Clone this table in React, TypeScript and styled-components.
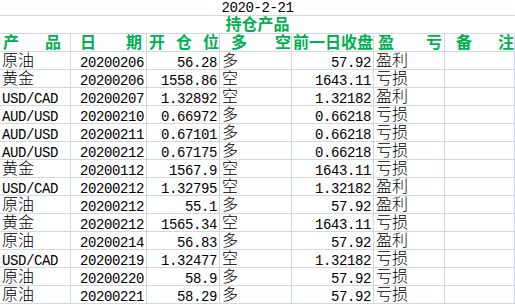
import React from "react";
import styled, { createGlobalStyle, css } from "styled-components";

const GRID = "#d0d7e5";
const GREEN = "#00b050";
const CJK = `"Noto Sans CJK SC", "Noto Sans", sans-serif`;
const MONO = `"Liberation Mono", "DejaVu Sans Mono", monospace`;

const GlobalStyle = createGlobalStyle`
  html, body { margin: 0; padding: 0; background: #ffffff; }
  body { width: 515px; height: 305px; overflow: hidden; }
`;

type Kind = "cjk" | "latin";

const textKind = (k: Kind) =>
  k === "cjk"
    ? css`
        font-family: ${CJK};
        font-size: 16px;
        font-weight: 300;
        line-height: 15px;
        padding-top: 0px;
      `
    : css`
        font-family: ${MONO};
        font-size: 14px;
        letter-spacing: -0.4px;
        line-height: 15px;
        padding-top: 4px;
      `;

const Sheet = styled.div`
  display: flex;
  flex-direction: column;
  width: 515px;
  color: #000;
`;

const SpanRow = styled.div<{ $h: number; $kind: Kind; $accent?: boolean }>`
  box-sizing: border-box;
  height: ${(p) => p.$h}px;
  border-bottom: 1px solid ${GRID};
  text-align: center;
  white-space: nowrap;
  ${(p) => textKind(p.$kind)}
  ${(p) =>
    p.$accent &&
    css`
      color: ${GREEN};
      font-weight: 700;
    `}
`;

const TitleRow = styled(SpanRow)`
  padding-top: 1px;
`;

const Row = styled.div`
  display: grid;
  grid-template-columns: 71px 76px 73px 72px 82px 71px 70px;
  height: 18px;
`;

const Cell = styled.div<{ $kind?: Kind; $align?: "left" | "right" }>`
  box-sizing: border-box;
  height: 18px;
  border-right: 1px solid ${GRID};
  border-bottom: 1px solid ${GRID};
  white-space: nowrap;
  padding-left: 2px;
  padding-right: 2px;
  text-align: ${(p) => p.$align ?? "left"};
  ${(p) => textKind(p.$kind ?? "latin")}
`;

const HeadCell = styled.div<{ $pl: number; $pr: number; $spread?: boolean }>`
  box-sizing: border-box;
  height: 18px;
  border-right: 1px solid ${GRID};
  border-bottom: 1px solid ${GRID};
  display: flex;
  justify-content: ${(p) => (p.$spread ? "space-between" : "flex-end")};
  padding-left: ${(p) => p.$pl}px;
  padding-right: ${(p) => p.$pr}px;
  white-space: nowrap;
  overflow: visible;
  font-family: ${CJK};
  font-size: 16px;
  font-weight: 700;
  line-height: 15px;
  padding-top: 0px;
  color: ${GREEN};
`;

type Rec = [string, string, string, string, string, string];

const rows: Rec[] = [
  ["原油", "20200206", "56.28", "多", "57.92", "盈利"],
  ["黄金", "20200206", "1558.86", "空", "1643.11", "亏损"],
  ["USD/CAD", "20200207", "1.32892", "空", "1.32182", "盈利"],
  ["AUD/USD", "20200210", "0.66972", "多", "0.66218", "亏损"],
  ["AUD/USD", "20200211", "0.67101", "多", "0.66218", "亏损"],
  ["AUD/USD", "20200212", "0.67175", "多", "0.66218", "亏损"],
  ["黄金", "20200112", "1567.9", "空", "1643.11", "亏损"],
  ["USD/CAD", "20200212", "1.32795", "空", "1.32182", "盈利"],
  ["原油", "20200212", "55.1", "多", "57.92", "盈利"],
  ["黄金", "20200212", "1565.34", "空", "1643.11", "亏损"],
  ["原油", "20200214", "56.83", "多", "57.92", "盈利"],
  ["USD/CAD", "20200219", "1.32477", "空", "1.32182", "亏损"],
  ["原油", "20200220", "58.9", "多", "57.92", "亏损"],
  ["原油", "20200221", "58.29", "多", "57.92", "亏损"],
];

const isCjk = (s: string) => /[\u4e00-\u9fff]/.test(s);

const headers: { chars: string[]; pl: number; pr: number }[] = [
  { chars: ["产", "品"], pl: 3, pr: 9 },
  { chars: ["日", "期"], pl: 9, pr: 4 },
  { chars: ["开", "仓", "位"], pl: 2, pr: 0 },
  { chars: ["多", "空"], pl: 11, pr: 0 },
  { chars: ["前一日收盘"], pl: 0, pr: 0 },
  { chars: ["盈", "亏"], pl: 4, pr: 2 },
  { chars: ["备", "注"], pl: 11, pr: 0 },
];

export default function App() {
  return (
    <>
      <GlobalStyle />
      <Sheet>
        <TitleRow $h={16} $kind="latin">
          2020-2-21
        </TitleRow>
        <SpanRow $h={18} $kind="cjk" $accent>
          持仓产品
        </SpanRow>
        <Row>
          {headers.map((h, i) => (
            <HeadCell key={i} $pl={h.pl} $pr={h.pr} $spread={h.chars.length > 1}>
              {h.chars.map((c) => (
                <span key={c}>{c}</span>
              ))}
            </HeadCell>
          ))}
        </Row>
        {rows.map((r, i) => (
          <Row key={i}>
            <Cell $kind={isCjk(r[0]) ? "cjk" : "latin"}>{r[0]}</Cell>
            <Cell $align="right">{r[1]}</Cell>
            <Cell $align="right">{r[2]}</Cell>
            <Cell $kind="cjk">{r[3]}</Cell>
            <Cell $align="right">{r[4]}</Cell>
            <Cell $kind="cjk">{r[5]}</Cell>
            <Cell />
          </Row>
        ))}
      </Sheet>
    </>
  );
}
